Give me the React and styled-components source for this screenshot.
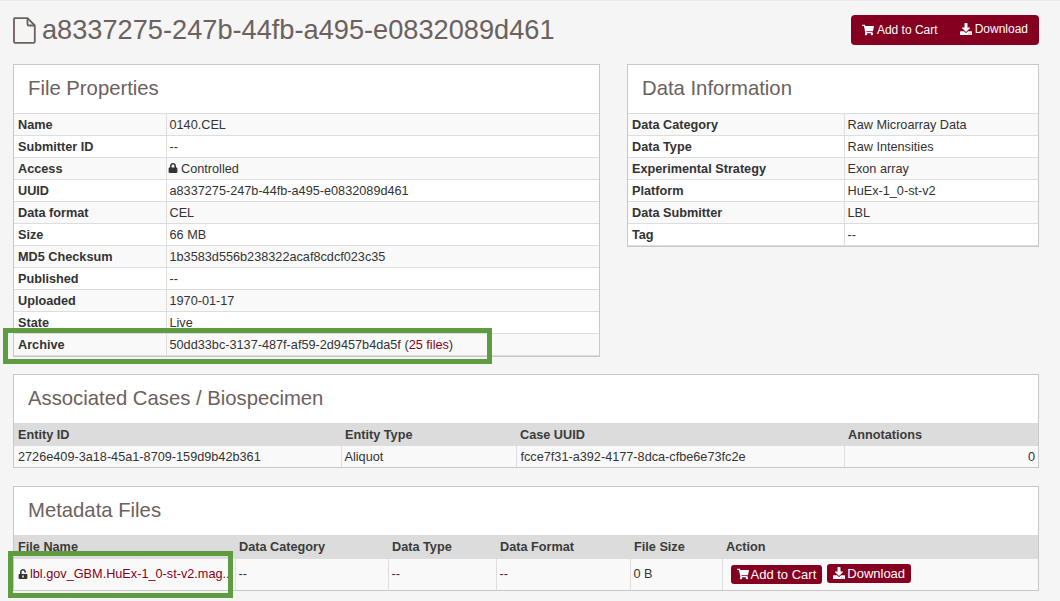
import React from 'react';
import styled, { createGlobalStyle } from 'styled-components';
import { FaShoppingCart, FaDownload, FaLock, FaUnlockAlt } from 'react-icons/fa';

const GlobalStyle = createGlobalStyle`
  html, body {
    margin: 0;
    padding: 0;
    background: #f5f5f5;
  }
  * { box-sizing: border-box; }
`;

const Page = styled.div`
  position: relative;
  width: 1060px;
  height: 601px;
  overflow: hidden;
  padding: 0 21px 0 13px;
  border-top: 1px solid #ececec;
  background: #f5f5f5;
  color: #333;
  font-family: "Liberation Sans", Arial, sans-serif;
  font-size: 12.7px;
`;

const Header = styled.div`
  display: flex;
  align-items: flex-start;
  justify-content: space-between;
  height: 63px;
`;

const Title = styled.h1`
  display: flex;
  align-items: center;
  gap: 6px;
  margin: 14px 0 0;
  font-size: 27.2px;
  font-weight: 400;
  line-height: 30px;
  color: #6b615e;
`;

const ButtonGroup = styled.div`
  display: flex;
  align-items: center;
  gap: 22px;
  height: 30px;
  margin-top: 14px;
  padding: 0 11px;
  border-radius: 4px;
  background: #850020;
`;

const GroupButton = styled.span`
  display: flex;
  align-items: center;
  gap: 3px;
  color: #fff;
  font-size: 12px;
  margin-top: ${props => (props.$raised ? '-2px' : '0')};
`;

const Row = styled.div`
  display: flex;
  align-items: flex-start;
  justify-content: space-between;
`;

const Panel = styled.section`
  width: ${props => props.$width || '100%'};
  margin-bottom: ${props => props.$gap || '18px'};
  border: 1px solid #c8c8c8;
  background: #fff;
`;

const PanelTitle = styled.h2`
  height: 48px;
  margin: 0;
  padding: 0 14px;
  font-size: 20.3px;
  font-weight: 400;
  line-height: 47px;
  color: #6b615e;
`;

const Table = styled.table`
  width: 100%;
  table-layout: fixed;
  border-collapse: collapse;
`;

const Th = styled.th`
  height: ${props => props.$height || '22px'};
  padding: 2px 3px 0 4px;
  background: #dcdcdc;
  font-weight: 700;
  text-align: left;
  color: #3b3b3b;
`;

const Tr = styled.tr`
  background: ${props => (props.$striped ? '#f9f9f9' : '#fff')};
`;

const Label = styled.td`
  height: 22px;
  padding: 0 4px;
  border: 1px solid #ddd;
  border-left: 0;
  font-weight: 700;
  color: #333;
  white-space: nowrap;
`;

const Cell = styled.td`
  height: ${props => props.$height || '22px'};
  padding: ${props => props.$drop || '0'} 3px 0 ${props => props.$indent || '3px'};
  border: 1px solid #ddd;
  border-right: ${props => (props.$last ? '0' : '1px solid #ddd')};
  border-left: ${props => (props.$first ? '0' : '1px solid #ddd')};
  border-bottom: ${props => (props.$flush ? '0' : '1px solid #ddd')};
  text-align: ${props => (props.$right ? 'right' : 'left')};
  white-space: nowrap;
  overflow: hidden;
  color: #333;
`;

const Link = styled.span`
  color: #850020;
`;

const AccessLock = styled(FaLock)`
  margin-left: -2px;
`;

const LockedName = styled.span`
  display: inline-flex;
  align-items: center;
  gap: 2px;
`;

const SmallButton = styled.span`
  display: inline-flex;
  align-items: center;
  gap: 2px;
  height: 19px;
  padding: 0 6px;
  margin-right: 5px;
  border-radius: 3px;
  background: #850020;
  color: #fff;
  font-size: 13px;
  position: relative;
  top: ${props => (props.$raised ? '-1px' : '0')};
`;

const ArchiveMark = styled.div`
  position: absolute;
  left: 3px;
  top: 327px;
  width: 489px;
  height: 36px;
  border: 5px solid #5f9b41;
  pointer-events: none;
`;

const FileMark = styled.div`
  position: absolute;
  left: 8px;
  top: 550px;
  width: 225px;
  height: 47px;
  border: 5px solid #5f9b41;
  pointer-events: none;
`;

function FileIcon() {
  return (
    <svg width="23" height="27" viewBox="0 0 23 27" fill="none" stroke="#6b615e" strokeWidth="1.8" strokeLinejoin="round">
      <path d="M1.5 1.2H14.5L21.8 8.5V24.5Q21.8 25.8 20.5 25.8H2.5Q1 25.8 1 24.5V2Q1 1.2 1.5 1.2Z" />
      <path d="M14.5 1.2V7.2Q14.5 8.5 15.8 8.5H21.8" />
    </svg>
  );
}

const fileProps = [
  ['Name', '0140.CEL'],
  ['Submitter ID', '--'],
  ['Access', <><AccessLock size={10} /> Controlled</>],
  ['UUID', 'a8337275-247b-44fb-a495-e0832089d461'],
  ['Data format', 'CEL'],
  ['Size', '66 MB'],
  ['MD5 Checksum', '1b3583d556b238322acaf8cdcf023c35'],
  ['Published', '--'],
  ['Uploaded', '1970-01-17'],
  ['State', 'Live'],
  ['Archive', <>50dd33bc-3137-487f-af59-2d9457b4da5f (<Link>25 files</Link>)</>],
];

const dataInfo = [
  ['Data Category', 'Raw Microarray Data'],
  ['Data Type', 'Raw Intensities'],
  ['Experimental Strategy', 'Exon array'],
  ['Platform', 'HuEx-1_0-st-v2'],
  ['Data Submitter', 'LBL'],
  ['Tag', '--'],
];

function PropsTable({ rows, labelWidth }) {
  return (
    <Table>
      <colgroup>
        <col style={{ width: labelWidth }} />
        <col />
      </colgroup>
      <tbody>
        {rows.map(([label, value], i) => (
          <Tr key={label} $striped={i % 2 === 0}>
            <Label>{label}</Label>
            <Cell $last>{value}</Cell>
          </Tr>
        ))}
      </tbody>
    </Table>
  );
}

export default function App() {
  return (
    <Page>
      <GlobalStyle />
      <Header>
        <Title>
          <FileIcon />
          a8337275-247b-44fb-a495-e0832089d461
        </Title>
        <ButtonGroup>
          <GroupButton><FaShoppingCart size={12} /> Add to Cart</GroupButton>
          <GroupButton $raised><FaDownload size={12} /> Download</GroupButton>
        </ButtonGroup>
      </Header>

      <Row>
        <Panel $width="587px" $gap="17px">
          <PanelTitle>File Properties</PanelTitle>
          <PropsTable rows={fileProps} labelWidth="152px" />
        </Panel>
        <Panel $width="412px">
          <PanelTitle>Data Information</PanelTitle>
          <PropsTable rows={dataInfo} labelWidth="216px" />
        </Panel>
      </Row>

      <Panel>
        <PanelTitle>Associated Cases / Biospecimen</PanelTitle>
        <Table>
          <colgroup>
            <col style={{ width: 327 }} />
            <col style={{ width: 175 }} />
            <col style={{ width: 328 }} />
            <col />
          </colgroup>
          <thead>
            <tr>
              <Th>Entity ID</Th>
              <Th>Entity Type</Th>
              <Th>Case UUID</Th>
              <Th>Annotations</Th>
            </tr>
          </thead>
          <tbody>
            <Tr $striped>
              <Cell $first $flush $drop="2px" $indent="4px">2726e409-3a18-45a1-8709-159d9b42b361</Cell>
              <Cell $flush $drop="2px">Aliquot</Cell>
              <Cell $flush $drop="2px" $indent="4px">fcce7f31-a392-4177-8dca-cfbe6e73fc2e</Cell>
              <Cell $flush $last $right $drop="2px">0</Cell>
            </Tr>
          </tbody>
        </Table>
      </Panel>

      <Panel>
        <PanelTitle>Metadata Files</PanelTitle>
        <Table>
          <colgroup>
            <col style={{ width: 221 }} />
            <col style={{ width: 153 }} />
            <col style={{ width: 108 }} />
            <col style={{ width: 134 }} />
            <col style={{ width: 92 }} />
            <col />
          </colgroup>
          <thead>
            <tr>
              <Th $height="23px">File Name</Th>
              <Th $height="23px">Data Category</Th>
              <Th $height="23px">Data Type</Th>
              <Th $height="23px">Data Format</Th>
              <Th $height="23px">File Size</Th>
              <Th $height="23px">Action</Th>
            </tr>
          </thead>
          <tbody>
            <Tr $striped>
              <Cell $first $flush $indent="4px" $height="32px">
                <LockedName><FaUnlockAlt size={10} /><Link>lbl.gov_GBM.HuEx-1_0-st-v2.mag...</Link></LockedName>
              </Cell>
              <Cell $flush $height="32px">--</Cell>
              <Cell $flush $height="32px">--</Cell>
              <Cell $flush $height="32px">--</Cell>
              <Cell $flush $height="32px">0 B</Cell>
              <Cell $flush $last $height="32px" $indent="8px">
                <SmallButton><FaShoppingCart size={12} /> Add to Cart</SmallButton>
                <SmallButton $raised><FaDownload size={12} /> Download</SmallButton>
              </Cell>
            </Tr>
          </tbody>
        </Table>
      </Panel>

      <ArchiveMark />
      <FileMark />
    </Page>
  );
}
